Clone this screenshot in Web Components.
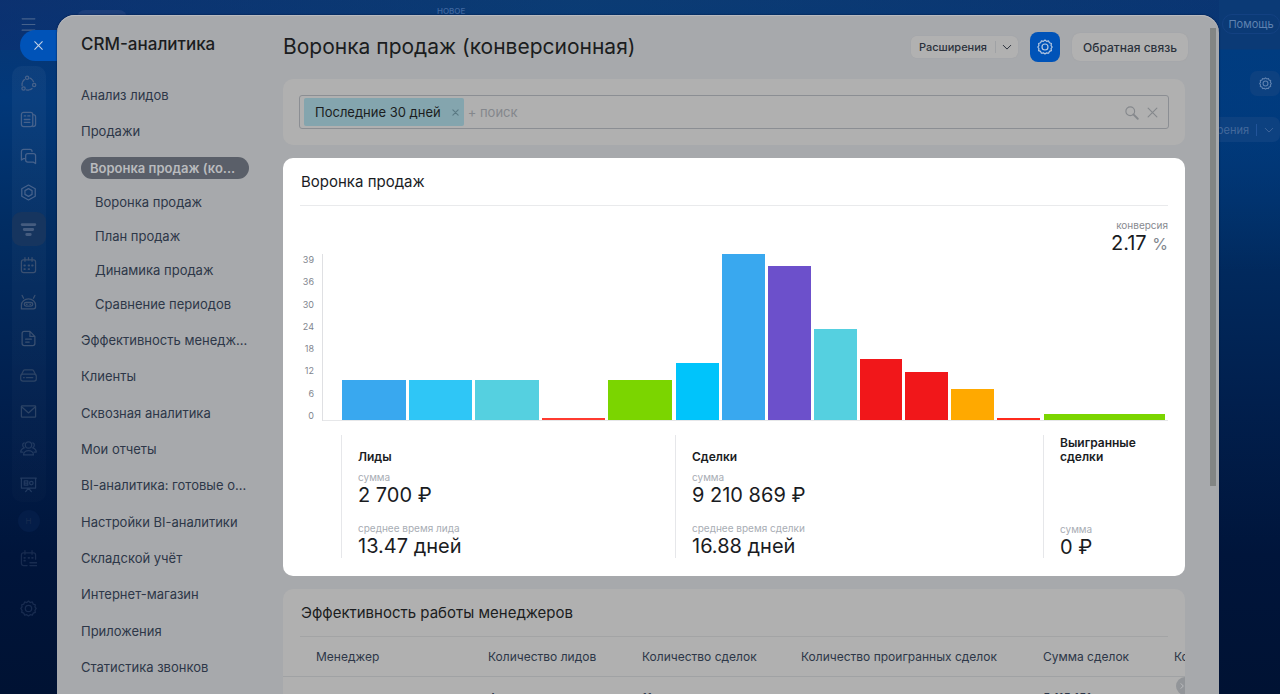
<!DOCTYPE html>
<html lang="ru">
<head>
<meta charset="UTF-8">
<meta name="viewport" content="width=device-width, initial-scale=1.0">
<title>CRM-аналитика</title>
<style>
  body {
    margin: 0;
    height: 100vh;
    overflow: hidden;
    font-family: Inter, "Noto Sans", sans-serif;
    font-size: 13px;
    color: #1b1d20;
  }
</style>
</head>
<body>
<crm-desktop>
  <icon-rail slot="rail"></icon-rail>
  <slide-panel slot="panel">
    <report-nav slot="nav" heading="CRM-аналитика"></report-nav>
    <page-header slot="main">Воронка продаж (конверсионная)</page-header>
    <filter-bar slot="main" preset="Последние 30 дней"></filter-bar>
    <report-card slot="main" active heading="Воронка продаж">
      <funnel-chart></funnel-chart>
    </report-card>
    <report-card slot="main" heading="Эффективность работы менеджеров">
      <manager-table></manager-table>
    </report-card>
  </slide-panel>
  <desktop-edge slot="edge"></desktop-edge>
</crm-desktop>

<script>
const GEAR = '<path d="M12 1.500l2.400 2.100 3-.8 1.200 2.900 3 1-.5 3.100 1.700 2.200-1.700 2.500.5 3-3 1.100-1.200 2.800-3-.7L12 22.500l-2.400-1.800-3 .7-1.200-2.800-3-1.100.5-3L1.200 12l1.700-2.200-.5-3.100 3-1 1.200-2.900 3 .8z"/><circle cx="12" cy="12" r="4.500"/>';

const ICONS = {
  menu: '<path d="M3 4h18M3 12h18M3 20h18"/>',
  gear: GEAR,
  close: '<path d="M5 5l14 14M19 5L5 19"/>',
  chevron: '<path d="M3 8l9 9 9-9"/>',
  right: '<path d="M9 5l7 7-7 7"/>',
  search: '<circle cx="10" cy="10" r="7"/><path d="M15 15l7 7" stroke-width="3"/>',
  nodes: '<circle cx="10" cy="4" r="2.3"/><circle cx="20" cy="14" r="2.3"/><circle cx="5" cy="19" r="2.3"/><path d="M14 4.5a9 9 0 0 1 5 5M3 15a9 9 0 0 1 4-9M9 21a9 9 0 0 0 8-2" stroke-dasharray="4 1.5"/>',
  news: '<rect x="2" y="2" width="16" height="20" rx="3"/><path d="M18 5c3 0 4 1 4 3v11c0 2-1 3-4 3M6 12h8M6 16h8M11 7h3M6 7h2" />',
  chat: '<path d="M7 15H5l-3 2V5a3 3 0 0 1 3-3h9a3 3 0 0 1 3 3"/><path d="M11 8h8a3 3 0 0 1 3 3v11l-3-2h-8a3 3 0 0 1-3-3v-6a3 3 0 0 1 3-3z"/>',
  hexagon: '<path d="M12 1.5l9.5 5.2v10.6L12 22.5l-9.5-5.2V6.700z"/><path d="M12 6.500l5 2.800v5.400l-5 2.800-5-2.800V9.300z"/>',
  funnel: '<path d="M3 5h18M6 12h12M9.500 19h5" stroke-width="4"/>',
  calendar: '<rect x="2" y="4" width="20" height="18" rx="3"/><path d="M7 1v5M12 1v3M17 1v5"/><path d="M6 12h1M12 12h1M17 12h1M6 17h1M12 17h1" stroke-width="2.500"/>',
  robot: '<path d="M2 21v-5a10 9 0 0 1 20 0v2a3 3 0 0 1-3 3zM5 6L3 2M19 6l2-4"/><rect x="6" y="12" width="12" height="5" rx="2.500"/><path d="M9 14.500h1M14 14.500h1"/>',
  doc: '<path d="M14 2H6a3 3 0 0 0-3 3v14a3 3 0 0 0 3 3h12a3 3 0 0 0 3-3V9zM14 2v7h7M8 13h8M8 17h5"/>',
  drive: '<path d="M2 11l3-6c.5-1 1-1 2-1h10c1 0 1.500 0 2 1l3 6"/><rect x="1" y="10" width="22" height="10" rx="3"/><path d="M5 15h1M9 15h9"/>',
  mail: '<rect x="2" y="4" width="20" height="16" rx="1"/><path d="M3 6l9 8 9-8"/>',
  people: '<circle cx="12" cy="7" r="4.500"/><path d="M5 21c0-8 14-8 14 0zM6 4c-3 1-3 5 0 7-3 1-5 3-5 6h3M18 4c3 1 3 5 0 7 3 1 5 3 5 6h-3"/>',
  board: '<path d="M1 3h22M2 3v14h20V3M8 22l4-5 4 5"/><path d="M6 7h5v6H6zM6 10h5"/><circle cx="16" cy="10" r="2.500"/>',
  plan: '<path d="M10 22H5a3 3 0 0 1-3-3V7a3 3 0 0 1 3-3h14a3 3 0 0 1 3 3v6M7 1v5M17 1v5M14 18h10M14 22h10"/><path d="M6 11h1M12 11h1M17 11h1M6 15h1" stroke-width="2.500"/>'
};

function icon(name, size, width = 1.8) {
  return `<svg aria-hidden="true" width="${size}" height="${size}" viewBox="0 0 24 24" fill="none" stroke="currentColor" stroke-width="${width}" stroke-linecap="round" stroke-linejoin="round">${ICONS[name]}</svg>`;
}

class CrmDesktop extends HTMLElement {
  connectedCallback() {
    this.attachShadow({ mode: 'open' });
    this.shadowRoot.innerHTML = `
      <style>
        :host {
          display: grid;
          grid-template-columns: 57px minmax(0, 1fr) 61px;
          position: relative;
          height: 100%;
          background:
            linear-gradient(90deg, rgba(13, 45, 110, 0.5), rgba(13, 70, 120, 0.35) 45%, rgba(10, 50, 115, 0.3)) top / 100% 50px no-repeat,
            linear-gradient(180deg, #0a3672 0%, #01387a 14%, #012d63 32%, #011f4d 58%, #00153b 80%, #001233 100%);
        }
        .tab, .badge {
          position: absolute;
          top: 10px;
        }
        .tab {
          left: 77px;
          width: 50px;
          height: 20px;
          border-radius: 8px 8px 0 0;
          background: #1c3f7b;
        }
        .badge {
          top: 6px;
          left: 437px;
          font-size: 8px;
          line-height: 10px;
          font-weight: 500;
          color: #4168a0;
        }
        ::slotted([slot="panel"]) {
          position: relative;
          margin-top: 15px;
        }
      </style>
      <div class="tab"></div>
      <div class="badge">НОВОЕ</div>
      <slot name="rail"></slot>
      <slot name="panel"></slot>
      <slot name="edge"></slot>
    `;
  }
}

class IconRail extends HTMLElement {
  connectedCallback() {
    const items = [
      ['nodes', 'Маркет'], ['news', 'Новости'], ['chat', 'Чаты'], ['hexagon', 'Проекты'],
      ['funnel', 'CRM'], ['calendar', 'Календарь'], ['robot', 'Роботы'], ['doc', 'Документы'],
      ['drive', 'Диск'], ['mail', 'Почта'], ['people', 'Группы'], ['board', 'BI']
    ];
    this.attachShadow({ mode: 'open' });
    this.shadowRoot.innerHTML = `
      <style>
        :host {
          display: flex;
          flex-direction: column;
          align-items: center;
          position: relative;
          height: 100vh;
        }
        button {
          display: grid;
          place-items: center;
          width: 34px;
          height: 34px;
          padding: 0;
          border: 0;
          border-radius: 9px;
          background: none;
          font: inherit;
          font-size: 8px;
          color: #46628c;
          flex: none;
        }
        .menu {
          margin: 7px 0 25px;
        }
        .group {
          display: flex;
          flex-direction: column;
          justify-content: space-between;
          height: 436px;
          border-radius: 10px;
          background: linear-gradient(180deg, rgba(255, 255, 255, 0.04), rgba(255, 255, 255, 0.01));
        }
        .group button:nth-child(n+6) { color: #3a5071; }
        .group button:nth-child(n+9) { color: #2d4466; }
        .group button:nth-child(n+11) { color: #223a60; }
        .group .current {
          background: #16355f;
          color: #455c7f;
        }
        .rest {
          display: flex;
          flex-direction: column;
          gap: 3px;
          padding-top: 2px;
        }
        .rest button { color: #182c50; }
        .letter span {
          display: grid;
          place-items: center;
          width: 22px;
          height: 22px;
          border-radius: 50%;
          background: #041d48;
        }
        .settings { margin-top: 13px; }
        .close {
          position: absolute;
          top: 30px;
          left: 20px;
          width: 37px;
          height: 31px;
          border-radius: 16px 0 0 16px;
          background: #0053b8;
          color: #c3d2e6;
        }
      </style>
      <button class="menu" aria-label="Меню">${icon('menu', 17, 1.6)}</button>
      <div class="group">
        ${items.map(([name, label]) => `<button class="${name === 'funnel' ? 'current' : ''}" aria-label="${label}">${icon(name, 17)}</button>`).join('')}
      </div>
      <div class="rest">
        <button class="letter"><span>H</span></button>
        <button aria-label="Планы">${icon('plan', 17)}</button>
        <button class="settings" aria-label="Настройки">${icon('gear', 17)}</button>
      </div>
      <button class="close" aria-label="Закрыть">${icon('close', 13, 2)}</button>
    `;
  }
}

class SlidePanel extends HTMLElement {
  connectedCallback() {
    this.attachShadow({ mode: 'open' });
    this.shadowRoot.innerHTML = `
      <style>
        :host {
          display: grid;
          grid-template-columns: 226px minmax(0, 1fr);
          box-sizing: border-box;
          height: calc(100vh - 15px);
          overflow: hidden;
          border-radius: 18px 18px 0 0;
          background: #a7a9ac;
          box-shadow: inset 0 1px #b9bbc0, 0 0 2px #00143c;
        }
        main {
          display: flex;
          flex-direction: column;
          gap: 13px;
          min-width: 0;
          padding: 15px 34px 0 0;
        }
        .thumb {
          position: absolute;
          top: 13px;
          right: 3px;
          width: 6px;
          height: 458px;
          background: #828584;
        }
      </style>
      <slot name="nav"></slot>
      <main><slot name="main"></slot></main>
      <div class="thumb"></div>
    `;
  }
}

class ReportNav extends HTMLElement {
  connectedCallback() {
    const link = (text) => `<li><a href="#">${text}</a></li>`;
    this.attachShadow({ mode: 'open' });
    this.shadowRoot.innerHTML = `
      <style>
        :host {
          display: flex;
          flex-direction: column;
          box-sizing: border-box;
          height: calc(100vh - 15px);
          padding: 17px 34px 16px 24px;
        }
        h2 {
          margin: 0 0 28px;
          font-size: 17px;
          line-height: 24px;
          font-weight: 500;
        }
        ul {
          display: flex;
          flex-direction: column;
          margin: 0;
          padding: 0;
          list-style: none;
        }
        .top {
          flex: 1;
          justify-content: space-between;
        }
        .sub { gap: 12px; }
        a {
          display: block;
          overflow: hidden;
          line-height: 22px;
          text-overflow: ellipsis;
          white-space: nowrap;
          text-decoration: none;
          color: #2d3748;
        }
        .sub a { padding-left: 14px; }
        .sub .current {
          padding: 0 12px 0 9px;
          border-radius: 11px;
          background: #5a5f69;
          color: #b9bbbe;
          font-weight: 600;
        }
      </style>
      <h2>${this.getAttribute('heading')}</h2>
      <ul class="top">
        ${link('Анализ лидов')}
        ${link('Продажи')}
        <li>
          <ul class="sub">
            <li><a class="current" href="#">Воронка продаж (ко...</a></li>
            ${['Воронка продаж', 'План продаж', 'Динамика продаж', 'Сравнение периодов'].map(link).join('')}
          </ul>
        </li>
        ${['Эффективность менедж...', 'Клиенты', 'Сквозная аналитика', 'Мои отчеты', 'BI-аналитика: готовые о...',
           'Настройки BI-аналитики', 'Складской учёт', 'Интернет-магазин', 'Приложения', 'Статистика звонков'].map(link).join('')}
      </ul>
    `;
  }
}

class PageHeader extends HTMLElement {
  connectedCallback() {
    this.attachShadow({ mode: 'open' });
    this.shadowRoot.innerHTML = `
      <style>
        :host {
          display: flex;
          align-items: center;
          gap: 12px;
          height: 34px;
          margin-right: -3px;
          padding-bottom: 2px;
        }
        h1 {
          flex: 1;
          margin: 0;
          font-size: 21px;
          line-height: 28px;
          font-weight: 400;
          white-space: nowrap;
        }
        button {
          display: grid;
          place-items: center;
          padding: 0;
          border: 0;
          background: #b1b1b1;
          font: inherit;
          color: #2b313c;
        }
        .split {
          display: flex;
          height: 22px;
          border-radius: 6px;
          overflow: hidden;
          background: #b1b1b1;
          box-shadow: 0 0 1px #9a9ca0;
        }
        .split button {
          font-size: 11px;
          font-weight: 500;
          padding: 0 8px;
        }
        .split .arrow {
          margin: 5px 0;
          padding: 0 6px;
          border-left: 1px solid #a0a2a5;
        }
        .gear {
          width: 30px;
          height: 30px;
          border-radius: 8px;
          background: #0053b8;
          color: #b5c8e2;
        }
        .feedback {
          height: 28px;
          padding: 0 11px;
          border-radius: 8px;
          font-size: 12px;
          font-weight: 500;
          box-shadow: 0 0 1px #9a9ca0;
        }
      </style>
      <h1><slot></slot></h1>
      <div class="split">
        <button>Расширения</button>
        <button class="arrow" aria-label="Ещё">${icon('chevron', 10, 2.4)}</button>
      </div>
      <button class="gear" aria-label="Настройки">${icon('gear', 16)}</button>
      <button class="feedback">Обратная связь</button>
    `;
  }
}

class FilterBar extends HTMLElement {
  connectedCallback() {
    this.attachShadow({ mode: 'open' });
    this.shadowRoot.innerHTML = `
      <style>
        :host {
          display: block;
          padding: 16px;
          border-radius: 10px;
          background: #b0b0b0;
        }
        .field {
          display: flex;
          align-items: center;
          gap: 4px;
          box-sizing: border-box;
          height: 34px;
          padding: 2px 8px 2px 4px;
          border: 1px solid #8b8e93;
          border-radius: 3px;
        }
        .tag {
          display: flex;
          align-items: center;
          gap: 10px;
          height: 28px;
          padding: 0 4px 0 11px;
          border-radius: 2px;
          background: #84a5ae;
          white-space: nowrap;
        }
        button {
          display: grid;
          place-items: center;
          padding: 0;
          border: 0;
          background: none;
          color: #85888c;
        }
        .tag button { color: #5b7a84; }
        input {
          flex: 1;
          min-width: 0;
          padding: 0;
          border: 0;
          outline: 0;
          background: none;
          font: inherit;
          color: inherit;
        }
        input::placeholder { color: #84878c; opacity: 1; }
        .tools {
          display: flex;
          gap: 6px;
        }
      </style>
      <div class="field">
        <span class="tag">${this.getAttribute('preset')}
          <button aria-label="Убрать фильтр">${icon('close', 9, 3)}</button>
        </span>
        <input type="text" placeholder="+ поиск" aria-label="Поиск">
        <div class="tools">
          <button aria-label="Найти">${icon('search', 15)}</button>
          <button aria-label="Сбросить">${icon('close', 15)}</button>
        </div>
      </div>
    `;
  }
}

class ReportCard extends HTMLElement {
  connectedCallback() {
    this.attachShadow({ mode: 'open' });
    this.shadowRoot.innerHTML = `
      <style>
        :host {
          display: block;
          overflow: hidden;
          flex: none;
          border-radius: 10px;
          background: #b0b0b0;
          --line: #a3a4a5;
        }
        :host([active]) {
          background: #fff;
          --line: #e9eaec;
          color: #1a1c1f;
        }
        h3 {
          margin: 0 17px;
          padding: 12px 1px 11px;
          border-bottom: 1px solid var(--line);
          font-size: 15px;
          line-height: 24px;
          font-weight: 400;
        }
      </style>
      <h3>${this.getAttribute('heading')}</h3>
      <slot></slot>
    `;
  }
}

class FunnelChart extends HTMLElement {
  connectedCallback() {
    // bar heights in px, the plot is 166px tall
    const groups = [
      [[40, '#39a8ef'], [40, '#2fc6f6'], [40, '#55d0e0'], [2, '#ff3b30'], [40, '#7bd500']],
      [[57, '#00c4fb'], [166, '#39a8ef'], [154, '#6c50cb'], [91, '#55d0e0'], [61, '#f1171a'], [48, '#f1171a'], [31, '#ffa900'], [2, '#ff2a1c']],
      [[6, '#7bd500']]
    ];
    const scale = [39, 36, 30, 24, 18, 12, 6, 0];
    const stages = [
      ['Лиды', [['сумма', '2 700 ₽'], ['среднее время лида', '13.47 дней']]],
      ['Сделки', [['сумма', '9 210 869 ₽'], ['среднее время сделки', '16.88 дней']]],
      ['Выигранные сделки', [['сумма', '0 ₽']]]
    ];
    this.attachShadow({ mode: 'open' });
    this.shadowRoot.innerHTML = `
      <style>
        :host {
          display: block;
          padding: 11px 17px 18px;
        }
        .conversion {
          height: 37px;
          text-align: right;
        }
        small {
          display: block;
          font-size: 10px;
          line-height: 16px;
          color: #a8adb4;
        }
        .conversion small { color: #878a8f; }
        .value {
          font-size: 20px;
          line-height: 20px;
        }
        .value i {
          font-size: 16px;
          font-style: normal;
          color: #80868e;
        }
        .plot {
          display: grid;
          grid-template-columns: 23px minmax(0, 1fr);
          height: 166px;
        }
        .scale {
          display: flex;
          flex-direction: column;
          justify-content: space-between;
          box-sizing: border-box;
          padding-right: 8px;
          border-right: 1px solid #dfe0e3;
          font-size: 9px;
          line-height: 11px;
          text-align: right;
          color: #7f858e;
        }
        .columns {
          display: grid;
          grid-template-columns: minmax(0, 334fr) minmax(0, 368fr) minmax(0, 125fr);
        }
        .bars {
          padding-left: 18px;
          border-bottom: 1px solid #e6e7e9;
        }
        .group {
          display: flex;
          align-items: flex-end;
          gap: 3px;
          padding: 0 3px 0 1px;
        }
        .group span {
          flex: 1;
        }
        .stages {
          margin: 15px 0 0 41px;
        }
        section {
          display: flex;
          flex-direction: column;
          box-sizing: border-box;
          height: 123px;
          padding: 1px 0;
          padding-left: 16px;
          border-left: 1px solid #e6e7ea;
        }
        h4 {
          display: flex;
          align-items: flex-end;
          height: 28px;
          margin: 0;
          font-size: 12px;
          line-height: 14px;
          font-weight: 600;
        }
        .metric { margin-top: 5px; }
        .metric + .metric { margin-top: 15px; }
        .metric:only-of-type { margin-top: auto; }
        .metric .value { white-space: nowrap; }
      </style>
      <div class="conversion">
        <small>конверсия</small>
        <div class="value">2.17 <i>%</i></div>
      </div>
      <div class="plot">
        <div class="scale">${scale.map((n) => `<span>${n}</span>`).join('')}</div>
        <div class="columns bars">
          ${groups.map((bars) => `<div class="group">${bars.map(([h, c]) => `<span style="height:${h}px;background:${c}"></span>`).join('')}</div>`).join('')}
        </div>
      </div>
      <div class="columns stages">
        ${stages.map(([name, metrics]) => `
          <section>
            <h4>${name}</h4>
            ${metrics.map(([label, value]) => `<div class="metric"><small>${label}</small><div class="value">${value}</div></div>`).join('')}
          </section>`).join('')}
      </div>
    `;
  }
}

class ManagerTable extends HTMLElement {
  connectedCallback() {
    const cols = [
      ['Менеджер', 188, ''], ['Количество лидов', 154, '4'], ['Количество сделок', 159, '11'],
      ['Количество проигранных сделок', 242, ''], ['Сумма сделок', 131, '5 115 151'], ['Конверсия', 120, '']
    ];
    this.attachShadow({ mode: 'open' });
    this.shadowRoot.innerHTML = `
      <style>
        :host {
          display: block;
          position: relative;
        }
        table {
          table-layout: fixed;
          width: 994px;
          border-collapse: collapse;
          color: #2d3748;
        }
        th, td {
          padding: 0;
          height: 39px;
          font-size: 12px;
          line-height: 16px;
          font-weight: 400;
          text-align: left;
          white-space: nowrap;
        }
        th { border-bottom: 1px solid #a0a2a4; }
        td { height: 42px; }
        th:first-child, td:first-child { padding-left: 33px; }
        button {
          display: grid;
          place-items: center;
          position: absolute;
          top: 40px;
          right: -9px;
          width: 18px;
          height: 18px;
          padding: 0 6px 0 0;
          border: 0;
          border-radius: 50%;
          background: #929599;
          color: #c0c2c4;
        }
      </style>
      <table>
        <colgroup>${cols.map(([, w], i) => `<col style="width:${i ? w : w + 17}px">`).join('')}</colgroup>
        <thead><tr>${cols.map(([name]) => `<th scope="col">${name}</th>`).join('')}</tr></thead>
        <tbody><tr>${cols.map(([, , value]) => `<td>${value}</td>`).join('')}</tr></tbody>
      </table>
      <button aria-label="Прокрутить вправо">${icon('right', 8, 2.6)}</button>
    `;
  }
}

class DesktopEdge extends HTMLElement {
  connectedCallback() {
    this.attachShadow({ mode: 'open' });
    this.shadowRoot.innerHTML = `
      <style>
        :host {
          display: flex;
          flex-direction: column;
          align-items: flex-end;
          min-width: 0;
          padding-top: 14px;
          color: #5f82b0;
          background: linear-gradient(180deg, #0b3a76 0, #0b3a76 49px, #003c80 50px, rgba(0, 61, 128, 0) 270px) no-repeat;
          overflow: hidden;
        }
        button {
          display: flex;
          align-items: center;
          justify-content: center;
          flex: none;
          box-sizing: border-box;
          padding: 0;
          border: 0;
          background: #0d4180;
          font: inherit;
          font-size: 11px;
          line-height: 16px;
          color: inherit;
        }
        .help {
          width: 58px;
          height: 20px;
          border: 1px solid #134182;
          border-radius: 10px;
          background: none;
        }
        .gear {
          width: 30px;
          height: 25px;
          margin-top: 37px;
          border-radius: 7px;
        }
        .split {
          gap: 7px;
          height: 25px;
          margin-top: 21px;
          padding-right: 6px;
          border-radius: 7px;
          color: #44699c;
        }
        .split i {
          width: 1px;
          height: 12px;
          background: #22549a;
        }
      </style>
      <button class="help">Помощь</button>
      <button class="gear" aria-label="Настройки">${icon('gear', 13, 2)}</button>
      <button class="split"><span>Расширения</span><i></i>${icon('chevron', 10, 2.2)}</button>
    `;
  }
}

customElements.define('crm-desktop', CrmDesktop);
customElements.define('icon-rail', IconRail);
customElements.define('slide-panel', SlidePanel);
customElements.define('report-nav', ReportNav);
customElements.define('page-header', PageHeader);
customElements.define('filter-bar', FilterBar);
customElements.define('report-card', ReportCard);
customElements.define('funnel-chart', FunnelChart);
customElements.define('manager-table', ManagerTable);
customElements.define('desktop-edge', DesktopEdge);
</script>
</body>
</html>
